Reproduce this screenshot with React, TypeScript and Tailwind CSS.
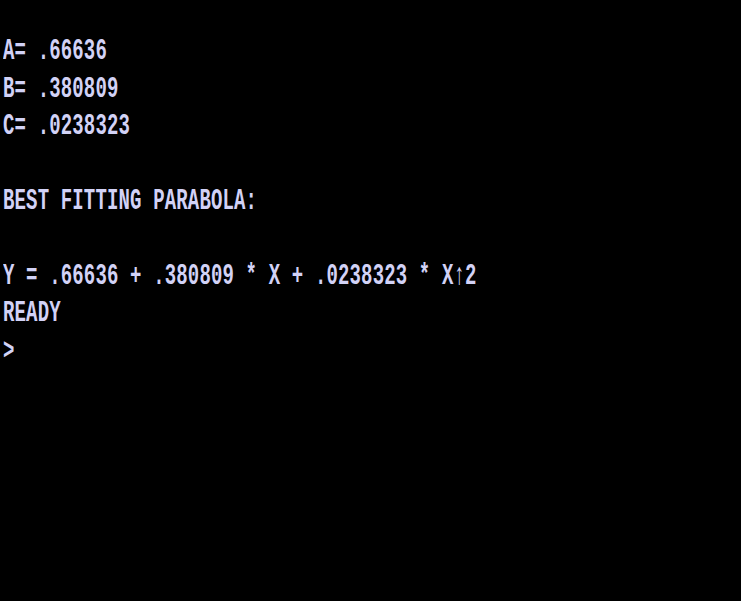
import React from "react";

const lines = [
  "A= .66636",
  "B= .380809",
  "C= .0238323",
  "",
  "BEST FITTING PARABOLA:",
  "",
  "Y = .66636 + .380809 * X + .0238323 * X\u21912",
  "READY",
  ">",
];

export default function App() {
  return (
    <div className="w-[741px] h-[601px] bg-black overflow-hidden">
      <div
        className="pt-[33px] pl-[3px] text-[#d2d2f6] text-[19px] tracking-[0.15px] font-bold"
        style={{ fontFamily: '"Liberation Mono", "DejaVu Sans Mono", monospace' }}
      >
        {lines.map((l, i) => (
          <div key={i} className="h-[37.4px] flex items-center whitespace-pre">
            <span className="inline-block scale-y-[1.6] origin-center">{l || " "}</span>
          </div>
        ))}
      </div>
    </div>
  );
}
